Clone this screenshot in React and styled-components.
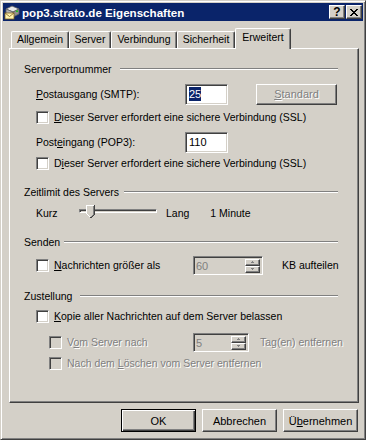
import React from "react";
import styled, { createGlobalStyle } from "styled-components";

const GlobalStyle = createGlobalStyle`
  html, body {
    margin: 0;
    padding: 0;
    background: #d4d0c8;
  }
  body {
    font-family: "Liberation Sans", Arial, sans-serif;
    font-size: 10.5px;
    color: #000;
  }
`;

const Window = styled.div`
  width: 366px;
  height: 440px;
  box-sizing: border-box;
  background: #d4d0c8;
  border: 1px solid;
  border-color: #d4d0c8 #404040 #404040 #d4d0c8;
  box-shadow: inset 1px 1px #fff, inset -1px -1px #808080;
  padding: 2px;
  display: flex;
  flex-direction: column;
`;

const TitleBar = styled.div`
  height: 18px;
  background: #0a246a;
  display: flex;
  align-items: center;
  padding: 0 1px 0 1px;
`;

const Title = styled.div`
  flex: 1;
  margin-left: 2px;
  color: #fff;
  font-weight: bold;
  font-size: 11.6px;
  white-space: nowrap;
`;

const CaptionButton = styled.div`
  width: 16px;
  height: 14px;
  box-sizing: border-box;
  margin-left: ${(p) => p.$ml || 0}px;
  background: #d4d0c8;
  border: 1px solid;
  border-color: #fff #404040 #404040 #fff;
  box-shadow: inset -1px -1px #808080;
  display: flex;
  align-items: center;
  justify-content: center;
  font-weight: bold;
  font-size: 12px;
  line-height: 1;
`;

const Body = styled.div`
  flex: 1;
  padding: 7px 4px 0 6px;
  display: flex;
  flex-direction: column;
`;

const TabStrip = styled.div`
  height: 20px;
  display: flex;
  align-items: flex-end;
  padding-left: 2px;
`;

const Tab = styled.div`
  width: ${(p) => p.$w}px;
  height: ${(p) => (p.$active ? 21 : 17)}px;
  margin-bottom: ${(p) => (p.$active ? -1 : 0)}px;
  box-sizing: border-box;
  position: relative;
  z-index: ${(p) => (p.$active ? 1 : 0)};
  background: #d4d0c8;
  border-top: 1px solid #fff;
  border-left: 1px solid #fff;
  border-right: 1px solid #404040;
  border-radius: 2px 2px 0 0;
  box-shadow: inset -1px 0 #808080;
  display: flex;
  justify-content: center;
  padding-top: ${(p) => (p.$active ? 2 : 1)}px;
  font-size: 10.5px;
`;

const Panel = styled.div`
  height: 355px;
  box-sizing: border-box;
  border: 1px solid;
  border-color: #fff #404040 #404040 #fff;
  box-shadow: inset -1px -1px #808080;
  padding: 13px 20px 0 14px;
  display: flex;
  flex-direction: column;
`;

const GroupHeader = styled.div`
  height: 14px;
  margin-top: ${(p) => p.$mt || 0}px;
  display: flex;
  align-items: center;
`;

const EtchedLine = styled.div`
  flex: 1;
  margin-left: ${(p) => p.$gap || 6}px;
  border-top: 1px solid #808080;
  border-bottom: 1px solid #fff;
`;

const Row = styled.div`
  height: ${(p) => p.$h}px;
  margin-top: ${(p) => p.$mt || 0}px;
  padding-left: ${(p) => p.$indent || 12}px;
  display: flex;
  align-items: center;
  white-space: nowrap;
`;

const FieldLabel = styled.span`
  width: ${(p) => p.$w}px;
  flex: none;
`;

const EditBox = styled.div`
  width: ${(p) => p.$w}px;
  height: 21px;
  box-sizing: border-box;
  border: 1px solid;
  border-color: #808080 #fff #fff #808080;
  box-shadow: inset 1px 1px #404040, inset -1px -1px #d4d0c8;
  background: #fff;
  display: flex;
  align-items: center;
  padding-left: 3px;
  font-size: 11px;
`;

const Selected = styled.span`
  background: #0a246a;
  color: #fff;
  padding: 1px 0;
`;

const PushButton = styled.div`
  width: ${(p) => p.$w || 75}px;
  height: ${(p) => p.$h || 23}px;
  margin-left: ${(p) => p.$ml || 0}px;
  box-sizing: border-box;
  background: #d4d0c8;
  border: 1px solid;
  border-color: ${(p) => (p.$default ? "#000" : "#fff #404040 #404040 #fff")};
  box-shadow: ${(p) =>
    p.$default
      ? "inset 1px 1px #fff, inset -1px -1px #404040, inset -2px -2px #808080"
      : "inset -1px -1px #808080"};
  display: flex;
  align-items: center;
  justify-content: center;
  color: ${(p) => (p.$disabled ? "#808080" : "#000")};
  text-shadow: ${(p) => (p.$disabled ? "1px 1px 0 #fff" : "none")};
  font-size: 11px;
`;

const CheckBox = styled.div`
  width: 13px;
  height: 13px;
  flex: none;
  box-sizing: border-box;
  border: 1px solid;
  border-color: #808080 #fff #fff #808080;
  box-shadow: inset 1px 1px #404040, inset -1px -1px #d4d0c8;
  background: ${(p) => (p.$disabled ? "#d4d0c8" : "#fff")};
  margin-right: 5px;
`;

const CheckText = styled.span`
  color: ${(p) => (p.$disabled ? "#808080" : "#000")};
  text-shadow: ${(p) => (p.$disabled ? "1px 1px 0 #fff" : "none")};
`;

const CheckGroup = styled.div`
  display: flex;
  align-items: center;
  width: ${(p) => (p.$w ? `${p.$w}px` : "auto")};
  flex: none;
`;

const U = styled.span`
  text-decoration: underline;
`;

const SliderBox = styled.div`
  width: 78px;
  height: 22px;
  position: relative;
  flex: none;
`;

const Track = styled.div`
  margin-top: 7px;
  height: 4px;
  box-sizing: border-box;
  border: 1px solid;
  border-color: #808080 #fff #fff #808080;
  box-shadow: inset 1px 1px #404040;
`;

const ThumbWrap = styled.div`
  position: absolute;
  left: 7px;
  top: 3px;
  width: 9px;
  height: 13px;
`;

const Spin = styled.div`
  width: ${(p) => p.$w}px;
  height: 19px;
  box-sizing: border-box;
  flex: none;
  border: 1px solid;
  border-color: #808080 #fff #fff #808080;
  box-shadow: inset 1px 1px #404040, inset -1px -1px #d4d0c8;
  background: #d4d0c8;
  display: flex;
  align-items: stretch;
  padding: 2px 2px 1px 2px;
  color: #808080;
  font-size: 11px;
`;

const SpinValue = styled.span`
  flex: 1;
  display: flex;
  align-items: center;
`;

const SpinButtons = styled.div`
  width: 15px;
  display: flex;
  flex-direction: column;
`;

const SpinBtn = styled.div`
  flex: 1;
  box-sizing: border-box;
  border: 1px solid;
  border-color: #fff #404040 #404040 #fff;
  box-shadow: inset -1px -1px #808080;
  display: flex;
  align-items: center;
  justify-content: center;
`;

const After = styled.span`
  margin-left: ${(p) => p.$ml}px;
  color: ${(p) => (p.$disabled ? "#808080" : "#000")};
  text-shadow: ${(p) => (p.$disabled ? "1px 1px 0 #fff" : "none")};
`;

const ButtonRow = styled.div`
  display: flex;
  justify-content: flex-end;
  margin-top: 6px;
  padding-right: 1px;
`;

const MailIcon = () => (
  <svg width="16" height="16" viewBox="0 0 16 16">
    <polygon points="2,5 8,2 15,5 9,8" fill="#e8e8e8" stroke="#606060" strokeWidth="0.8" />
    <polygon points="2,5 9,8 9,13 2,10" fill="#b0b0b0" stroke="#606060" strokeWidth="0.8" />
    <polygon points="9,8 15,5 15,10 9,13" fill="#909090" stroke="#606060" strokeWidth="0.8" />
    <rect x="12" y="6.5" width="2" height="1.5" fill="#20c020" />
    <rect x="1" y="9" width="9" height="6" fill="#fff4b0" stroke="#806020" strokeWidth="0.8" />
    <polyline points="1,9 5.5,12.5 10,9" fill="none" stroke="#806020" strokeWidth="0.8" />
  </svg>
);

const CloseGlyph = () => (
  <svg width="8" height="7" viewBox="0 0 8 7" shapeRendering="crispEdges">
    <path d="M0 0h2v1h-2zM6 0h2v1h-2zM1 1h2v1h-2zM5 1h2v1h-2zM2 2h4v1h-4zM3 3h2v1h-2zM2 4h4v1h-4zM1 5h2v1h-2zM5 5h2v1h-2zM0 6h2v1h-2zM6 6h2v1h-2z" fill="#000" />
  </svg>
);

const Thumb = () => (
  <ThumbWrap>
    <svg width="9" height="13" viewBox="0 0 9 13" shapeRendering="crispEdges">
      <polygon points="0,0 9,0 9,9 4.5,13 0,9" fill="#d4d0c8" />
      <path d="M0 0h8v1h-8zM0 0h1v9h-1z" fill="#fff" />
      <path d="M8 0h1v9h-1z" fill="#404040" />
      <path d="M7 1h1v8h-1z" fill="#808080" />
      <path d="M1 9h1v1h-1zM2 10h1v1h-1zM3 11h1v1h-1z" fill="#fff" />
      <path d="M8 9h1v1h-1zM7 10h1v1h-1zM6 11h1v1h-1zM5 12h1v1h-1zM4 12h1v1h-1z" fill="#404040" />
      <path d="M7 9h1v1h-1zM6 10h1v1h-1zM5 11h1v1h-1z" fill="#808080" />
    </svg>
  </ThumbWrap>
);

const Arrow = ({ up }) => (
  <svg width="5" height="4" viewBox="0 0 5 4" shapeRendering="crispEdges">
    {up ? (
      <path d="M2 1h1v1h-1zM1 2h3v1h-3z" fill="#808080" />
    ) : (
      <path d="M1 1h3v1h-3zM2 2h1v1h-1z" fill="#808080" />
    )}
  </svg>
);

const Spinner = ({ w, value }) => (
  <Spin $w={w}>
    <SpinValue>{value}</SpinValue>
    <SpinButtons>
      <SpinBtn>
        <Arrow up />
      </SpinBtn>
      <SpinBtn>
        <Arrow />
      </SpinBtn>
    </SpinButtons>
  </Spin>
);

const tabs = [
  { label: "Allgemein", w: 58 },
  { label: "Server", w: 42 },
  { label: "Verbindung", w: 66 },
  { label: "Sicherheit", w: 58 },
  { label: "Erweitert", w: 56, active: true },
];

export default function App() {
  return (
    <>
      <GlobalStyle />
      <Window>
        <TitleBar>
          <MailIcon />
          <Title>pop3.strato.de Eigenschaften</Title>
          <CaptionButton>?</CaptionButton>
          <CaptionButton $ml={1}>
            <CloseGlyph />
          </CaptionButton>
        </TitleBar>
        <Body>
          <TabStrip>
            {tabs.map((t) => (
              <Tab key={t.label} $w={t.w} $active={t.active}>
                {t.label}
              </Tab>
            ))}
          </TabStrip>
          <Panel>
            <GroupHeader>
              Serverportnummer
              <EtchedLine $gap={8} />
            </GroupHeader>
            <Row $h={22} $mt={7}>
              <FieldLabel $w={149}>
                <U>P</U>ostausgang (SMTP):
              </FieldLabel>
              <EditBox $w={43}>
                <Selected>25</Selected>
              </EditBox>
              <PushButton $w={81} $h={21} $ml={28} $disabled>
                <U>S</U>tandard
              </PushButton>
            </Row>
            <Row $h={16} $mt={4}>
              <CheckBox />
              <CheckText>
                <U>D</U>ieser Server erfordert eine sichere Verbindung (SSL)
              </CheckText>
            </Row>
            <Row $h={22} $mt={6}>
              <FieldLabel $w={149}>
                Post<U>e</U>ingang (POP3):
              </FieldLabel>
              <EditBox $w={43}>110</EditBox>
            </Row>
            <Row $h={16} $mt={2}>
              <CheckBox />
              <CheckText>
                D<U>i</U>eser Server erfordert eine sichere Verbindung (SSL)
              </CheckText>
            </Row>

            <GroupHeader $mt={14}>
              Zeitlimit des Servers
              <EtchedLine $gap={5} />
            </GroupHeader>
            <Row $h={22} $mt={3}>
              <FieldLabel $w={43}>Kurz</FieldLabel>
              <SliderBox>
                <Track />
                <Thumb />
              </SliderBox>
              <After $ml={9}>Lang</After>
              <After $ml={21}>1 Minute</After>
            </Row>

            <GroupHeader $mt={11}>
              Senden
              <EtchedLine $gap={4} />
            </GroupHeader>
            <Row $h={20} $mt={6}>
              <CheckGroup $w={157}>
                <CheckBox />
                <CheckText>
                  <U>N</U>achrichten größer als
                </CheckText>
              </CheckGroup>
              <Spinner w={70} value="60" />
              <After $ml={19}>KB aufteilen</After>
            </Row>

            <GroupHeader $mt={14}>
              Zustellung
              <EtchedLine $gap={8} />
            </GroupHeader>
            <Row $h={16} $mt={5}>
              <CheckBox />
              <CheckText>
                <U>K</U>opie aller Nachrichten auf dem Server belassen
              </CheckText>
            </Row>
            <Row $h={20} $mt={8} $indent={25}>
              <CheckGroup $w={144}>
                <CheckBox $disabled />
                <CheckText $disabled>
                  V<U>o</U>m Server nach
                </CheckText>
              </CheckGroup>
              <Spinner w={56} value="5" />
              <After $ml={11} $disabled>
                Tag(en) entfernen
              </After>
            </Row>
            <Row $h={16} $mt={3} $indent={25}>
              <CheckBox $disabled />
              <CheckText $disabled>
                Nach dem <U>L</U>öschen vom Server entfernen
              </CheckText>
            </Row>
          </Panel>
          <ButtonRow>
            <PushButton $default>OK</PushButton>
            <PushButton $ml={6}>Abbrechen</PushButton>
            <PushButton $ml={6}>
              Ü<U>b</U>ernehmen
            </PushButton>
          </ButtonRow>
        </Body>
      </Window>
    </>
  );
}
